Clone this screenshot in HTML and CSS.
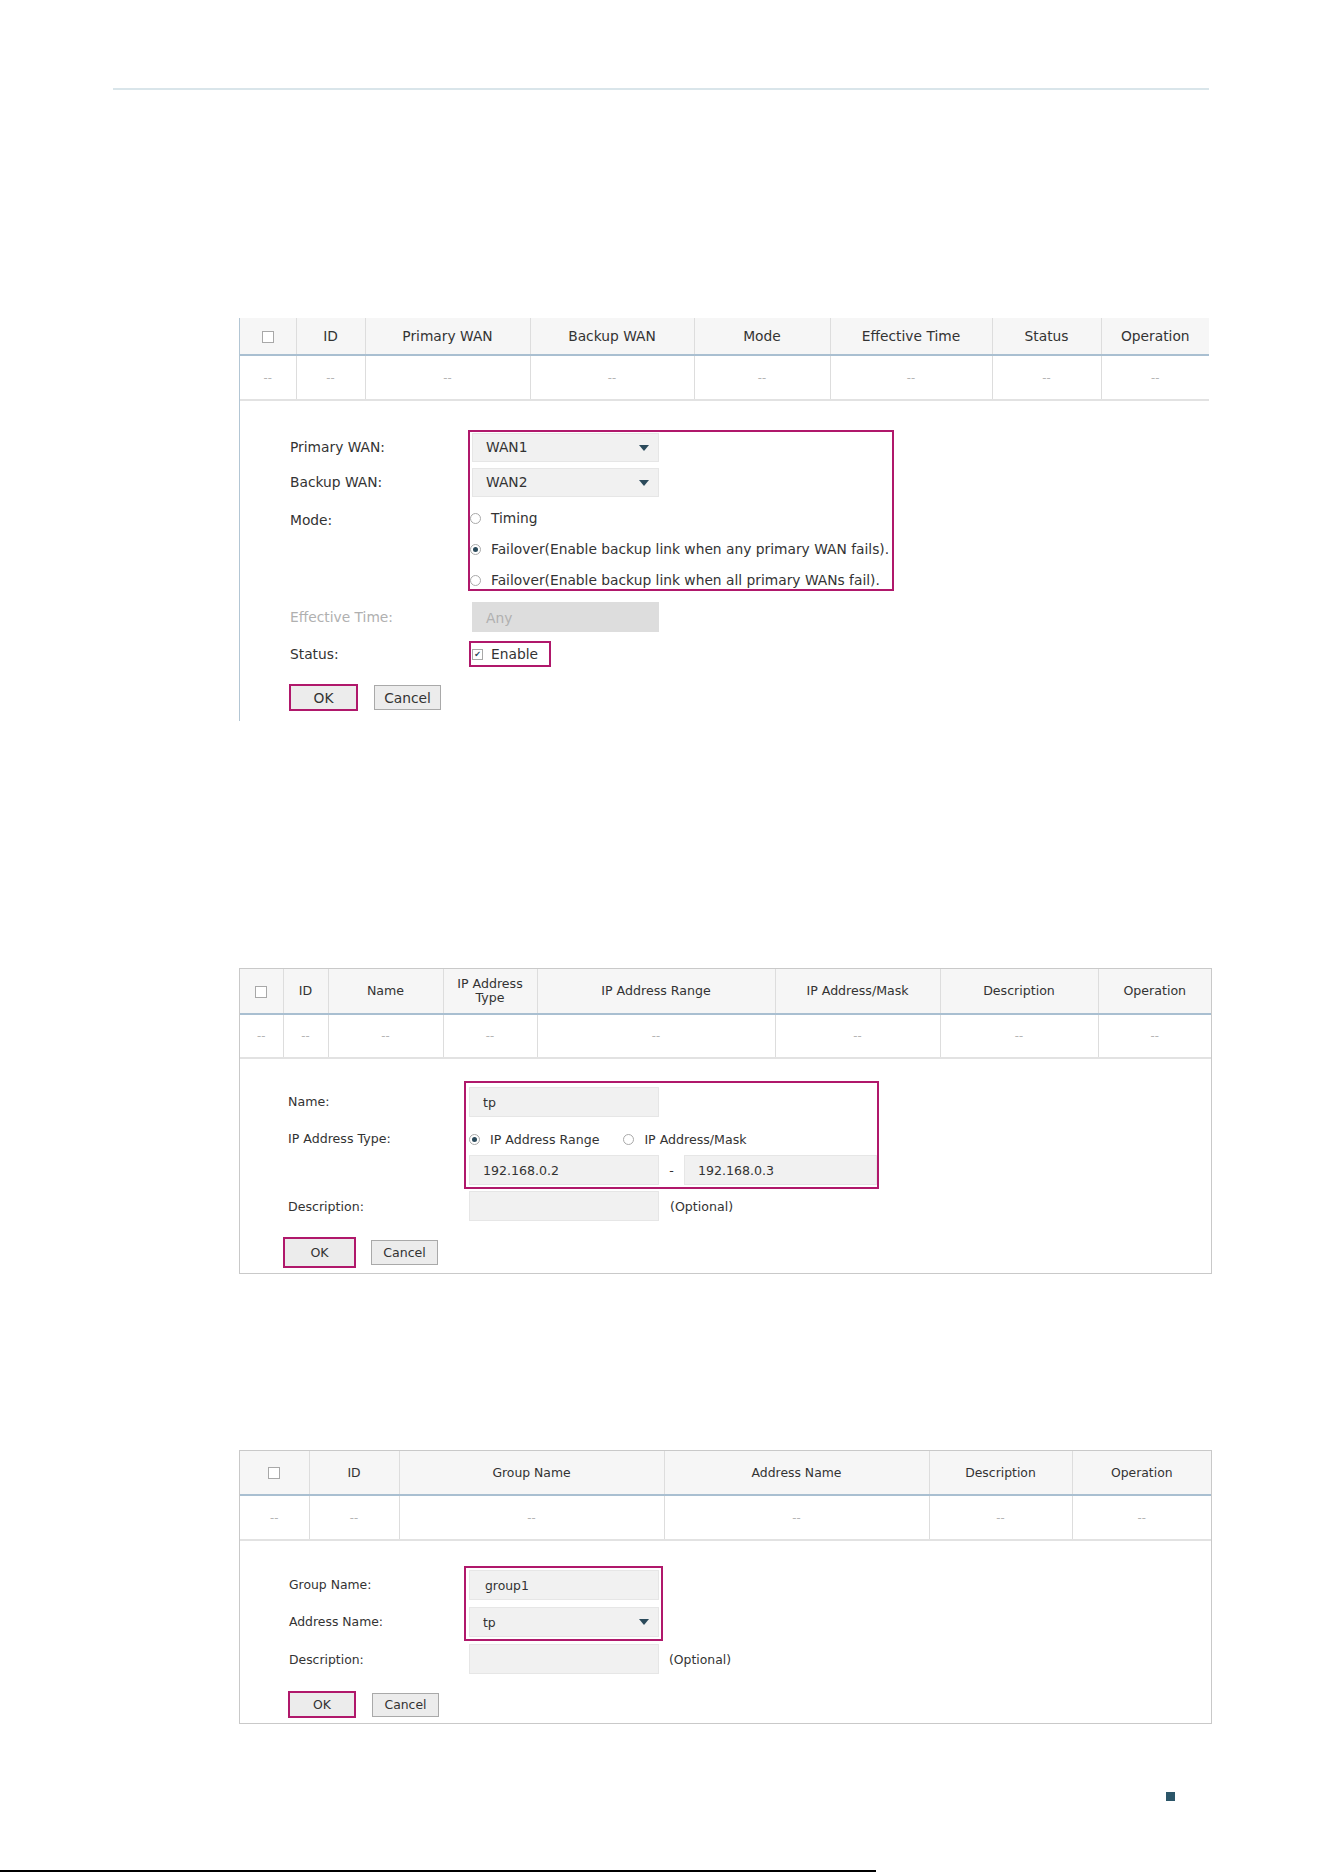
FILE: index.html
```html
<!DOCTYPE html>
<html lang="en">
  <head>
    <title>Link Backup / Address</title>
    <link rel="stylesheet" href="styles.css">
  </head>
  <body>
    <div class="page">
      <div class="rule"></div>

      <!-- link backup -->
      <section class="panel wan">
        <table class="grid">
          <colgroup>
            <col class="w56" /><col class="w69" /><col class="w165" /><col class="w164" />
            <col class="w136" /><col class="w162" /><col class="w109" /><col class="w108" />
          </colgroup>
          <tr>
            <th><span class="box"></span></th>
            <th>ID</th>
            <th>Primary WAN</th>
            <th>Backup WAN</th>
            <th>Mode</th>
            <th>Effective Time</th>
            <th>Status</th>
            <th>Operation</th>
          </tr>
          <tr>
            <td>--</td><td>--</td><td>--</td><td>--</td>
            <td>--</td><td>--</td><td>--</td><td>--</td>
          </tr>
        </table>

        <div class="form">
          <div class="pair">
            <div class="labels">
              <div class="lab tall">Primary WAN:</div>
              <div class="lab tall next">Backup WAN:</div>
              <div class="lab mode">Mode:</div>
            </div>
            <div class="hl hl-wan">
              <div class="select">WAN1<span class="arrow"></span></div>
              <div class="select next">WAN2<span class="arrow"></span></div>
              <div class="radios">
                <div class="radio"><span class="dot"></span>Timing</div>
                <div class="radio"><span class="dot on"></span>Failover(Enable backup link when any primary WAN fails).</div>
                <div class="radio"><span class="dot"></span>Failover(Enable backup link when all primary WANs fail).</div>
              </div>
            </div>
          </div>

          <div class="line eff">
            <div class="lab dim">Effective Time:</div>
            <div class="field off">Any</div>
          </div>

          <div class="line stat">
            <div class="lab">Status:</div>
            <div class="hl hl-check"><span class="box tick">&#10004;</span>Enable</div>
          </div>

          <div class="buttons">
            <button class="btn ok">OK</button>
            <button class="btn cancel">Cancel</button>
          </div>
        </div>
      </section>

      <!-- ip address -->
      <section class="panel framed ip">
        <table class="grid">
          <colgroup>
            <col class="w43" /><col class="w45" /><col class="w115" /><col class="w94" />
            <col class="w238" /><col class="w165" /><col class="w158" /><col class="w113" />
          </colgroup>
          <tr>
            <th><span class="box"></span></th>
            <th>ID</th>
            <th>Name</th>
            <th>IP Address<br />Type</th>
            <th>IP Address Range</th>
            <th>IP Address/Mask</th>
            <th>Description</th>
            <th>Operation</th>
          </tr>
          <tr>
            <td>--</td><td>--</td><td>--</td><td>--</td>
            <td>--</td><td>--</td><td>--</td><td>--</td>
          </tr>
        </table>

        <div class="form">
          <div class="pair">
            <div class="labels">
              <div class="lab tall">Name:</div>
              <div class="lab tall gap7">IP Address Type:</div>
            </div>
            <div class="hl hl-ip">
              <div class="field">tp</div>
              <div class="choice">
                <span class="dot on"></span>IP Address Range
                <span class="dot second"></span>IP Address/Mask
              </div>
              <div class="range">
                <div class="field">192.168.0.2</div>
                <span class="dash">-</span>
                <div class="field wide">192.168.0.3</div>
              </div>
            </div>
          </div>

          <div class="line desc">
            <div class="lab">Description:</div>
            <div class="field"></div>
            <span class="opt">(Optional)</span>
          </div>

          <div class="buttons">
            <button class="btn ok">OK</button>
            <button class="btn cancel">Cancel</button>
          </div>
        </div>
      </section>

      <!-- address group -->
      <section class="panel framed group">
        <table class="grid">
          <colgroup>
            <col class="w69" /><col class="w90" /><col class="w265" /><col class="w265" />
            <col class="w143" /><col class="w139" />
          </colgroup>
          <tr>
            <th><span class="box"></span></th>
            <th>ID</th>
            <th>Group Name</th>
            <th>Address Name</th>
            <th>Description</th>
            <th>Operation</th>
          </tr>
          <tr>
            <td>--</td><td>--</td><td>--</td>
            <td>--</td><td>--</td><td>--</td>
          </tr>
        </table>

        <div class="form">
          <div class="pair">
            <div class="labels">
              <div class="lab tall">Group Name:</div>
              <div class="lab tall gap7">Address Name:</div>
            </div>
            <div class="hl hl-group">
              <div class="field">group1</div>
              <div class="select gap7">tp<span class="arrow"></span></div>
            </div>
          </div>

          <div class="line desc">
            <div class="lab">Description:</div>
            <div class="field"></div>
            <span class="opt">(Optional)</span>
          </div>

          <div class="buttons">
            <button class="btn ok">OK</button>
            <button class="btn cancel">Cancel</button>
          </div>
        </div>
      </section>

      <div class="foot"><span class="mark"></span></div>
      <div class="cut"></div>
    </div>
  </body>
</html>
```

FILE: styles.css
```css
body {
  margin: 0;
  background: #ffffff;
  font-family: "DejaVu Sans", Verdana, sans-serif;
  color: #333333;
}
.page {
  width: 1324px;
  height: 1872px;
  overflow: hidden;
}
.rule {
  margin: 88px 0 0 113px;
  width: 1096px;
  height: 2px;
  background: #d9e5ea;
}

/* panels */
.panel {
  margin-left: 239px;
  width: 970px;
  box-sizing: border-box;
}
.wan {
  margin-top: 228px;
  border-left: 1px solid #b3c6d4;
  font-size: 13.8px;
}
.framed {
  width: 973px;
  border: 1px solid #c9c9c9;
  font-size: 12.6px;
}
.ip {
  margin-top: 247px;
}
.group {
  margin-top: 176px;
  font-size: 12.4px;
}

/* tables */
.grid {
  width: 100%;
  table-layout: fixed;
  border-collapse: collapse;
}
.grid th {
  background: #f6f6f6;
  font-weight: normal;
  color: #333333;
  border-right: 1px solid #dddddd;
  border-bottom: 2px solid #a9bfd1;
  padding: 0;
  line-height: 14px;
}
.grid td {
  color: #b5b5b5;
  text-align: center;
  border-right: 1px solid #dddddd;
  border-bottom: 2px solid #e2e2e2;
  padding: 0;
  font-size: 11.5px;
}
.grid th:last-child,
.grid td:last-child {
  border-right: none;
}
.wan th { height: 36px; }
.wan td { height: 43px; }
.ip th { height: 44px; }
.ip td { height: 42px; }
.group th { height: 43px; }
.group td { height: 43px; }

.w43 { width: 43px; }
.w45 { width: 45px; }
.w56 { width: 56px; }
.w69 { width: 69px; }
.w90 { width: 90px; }
.w94 { width: 94px; }
.w108 { width: 108px; }
.w109 { width: 109px; }
.w113 { width: 113px; }
.w115 { width: 115px; }
.w136 { width: 136px; }
.w139 { width: 139px; }
.w143 { width: 143px; }
.w158 { width: 158px; }
.w162 { width: 162px; }
.w164 { width: 164px; }
.w165 { width: 165px; }
.w238 { width: 238px; }
.w265 { width: 265px; }

.box {
  display: inline-block;
  width: 10px;
  height: 10px;
  border: 1px solid #a8a8a8;
  background: #ffffff;
  vertical-align: middle;
}

/* forms */
.form {
  display: flex;
  flex-direction: column;
}
.wan .form { padding: 29px 0 10px 50px; }
.ip .form { padding: 22px 0 5px 48px; }
.group .form { padding: 25px 0 5px 49px; }

.pair {
  display: flex;
}
.labels {
  display: flex;
  flex-direction: column;
  width: 178px;
}
.ip .labels { width: 176px; padding-top: 6px; }
.group .labels { width: 175px; padding-top: 4px; }
.wan .labels { padding-top: 3px; }

.lab {
  white-space: nowrap;
}
.tall {
  height: 30px;
  line-height: 30px;
}
.wan .tall {
  height: 29px;
  line-height: 29px;
}
.next { margin-top: 6px; }
.gap7 { margin-top: 7px; }
.mode {
  margin-top: 14px;
  line-height: 18px;
}
.dim { color: #b0b0b0; }

.hl {
  border: 2px solid #b0186b;
  box-sizing: border-box;
}
.hl-wan {
  width: 426px;
  height: 161px;
  padding-top: 1px;
}
.hl-ip {
  width: 415px;
  padding: 4px 0 2px 3px;
}
.hl-group {
  width: 199px;
  padding: 2px 0 2px 3px;
}

.select,
.field {
  position: relative;
  box-sizing: border-box;
  width: 190px;
  height: 30px;
  line-height: 30px;
  padding-left: 13px;
  background: #f1f1f1;
  border: 1px solid #e6e6e6;
  color: #333333;
}
.wan .select {
  width: 187px;
  height: 29px;
  line-height: 27px;
  margin-left: 2px;
}
.group .field { padding-left: 15px; }
.arrow {
  position: absolute;
  right: 9px;
  top: 11px;
  width: 0;
  height: 0;
  border-left: 5px solid transparent;
  border-right: 5px solid transparent;
  border-top: 6px solid #2b4a5b;
}

.radios {
  padding-top: 12px;
}
.radio {
  display: flex;
  align-items: center;
  line-height: 18px;
  white-space: nowrap;
  margin-bottom: 13px;
}
.radio:last-child {
  margin-bottom: 0;
}
.dot {
  display: inline-block;
  box-sizing: border-box;
  width: 11px;
  height: 11px;
  border: 1px solid #a9a9a9;
  border-radius: 50%;
  background: #ffffff;
  margin-right: 10px;
  position: relative;
}
.dot.on::after {
  content: "";
  position: absolute;
  left: 2px;
  top: 2px;
  width: 5px;
  height: 5px;
  border-radius: 50%;
  background: #2b4a5b;
}

.line {
  display: flex;
  align-items: center;
}
.line .lab { width: 178px; }
.eff { margin-top: 11px; }
.field.off {
  width: 187px;
  margin-left: 4px;
  background: #dddddd;
  border-color: #dddddd;
  color: #b0b0b0;
}
.stat { margin-top: 9px; }
.hl-check {
  display: flex;
  align-items: center;
  width: 82px;
  height: 26px;
  margin-left: 1px;
  padding-left: 1px;
}
.tick {
  width: 9px;
  height: 9px;
  margin-right: 8px;
  font-size: 8px;
  line-height: 9px;
  text-align: center;
  color: #2b4a5b;
}

.choice {
  display: flex;
  align-items: center;
  height: 30px;
  margin-top: 7px;
  white-space: nowrap;
}
.ip .dot { margin-right: 10px; }
.dot.second { margin-left: 24px; }

.range {
  display: flex;
  align-items: center;
  margin-top: 1px;
}
.dash {
  width: 25px;
  text-align: center;
}
.field.wide { width: 193px; }

.desc { margin-top: 2px; }
.group .desc { margin-top: 3px; }
.ip .desc .lab { width: 181px; }
.group .desc .lab { width: 180px; }
.opt { margin-left: 11px; }
.group .opt { margin-left: 10px; }

/* buttons */
.buttons {
  display: flex;
  align-items: center;
}
.btn {
  font-family: inherit;
  font-size: inherit;
  color: #333333;
  background: #ececec;
  box-sizing: border-box;
  padding: 0;
}
.ok {
  border: 2px solid #b0186b;
}
.cancel {
  border: 1px solid #a9a9a9;
  width: 67px;
}
.wan .buttons { margin-top: 17px; margin-left: -1px; }
.wan .ok { width: 69px; height: 27px; }
.wan .cancel { height: 25px; margin-left: 16px; }
.ip .buttons { margin-top: 16px; margin-left: -5px; }
.ip .ok { width: 73px; height: 31px; }
.ip .cancel { height: 25px; margin-left: 15px; }
.group .buttons { margin-top: 17px; margin-left: -1px; }
.group .ok { width: 68px; height: 27px; }
.group .cancel { height: 24px; margin-left: 16px; }

/* footer */
.foot {
  margin: 68px 0 0 1166px;
  height: 9px;
}
.mark {
  display: block;
  width: 9px;
  height: 9px;
  background: #2c5669;
}
.cut {
  margin-top: 69px;
  width: 876px;
  height: 2px;
  background: #000000;
}
```
